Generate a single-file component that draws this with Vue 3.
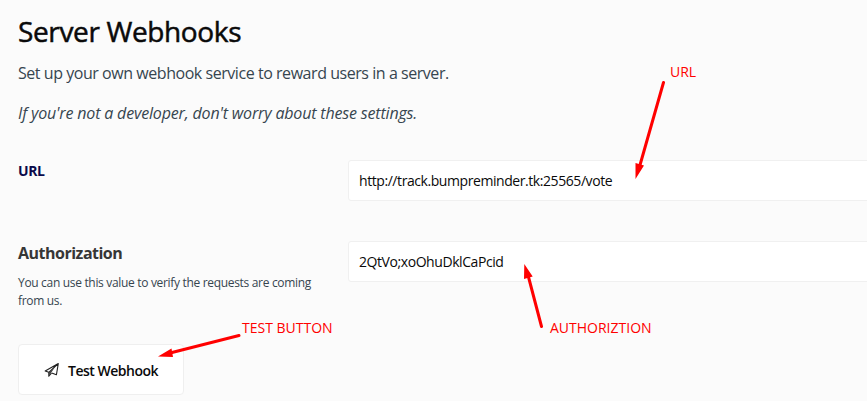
<script setup>
import { ref } from 'vue'

const url = ref('http://track.bumpreminder.tk:25565/vote')
const authorization = ref('2QtVo;xoOhuDklCaPcid')
</script>

<template>
  <main class="page">
    <h1 class="title">Server Webhooks</h1>
    <p class="lead">Set up your own webhook service to reward users in a server.</p>
    <p class="lead note">If you're not a developer, don't worry about these settings.</p>

    <section class="row">
      <div class="label-col">
        <label class="label url-label" for="url">URL</label>
      </div>
      <input id="url" v-model="url" class="field" type="text" />
    </section>

    <section class="row auth-row">
      <div class="label-col">
        <label class="label auth-label" for="auth">Authorization</label>
        <p class="hint">You can use this value to verify the requests are coming<br />from us.</p>
      </div>
      <input id="auth" v-model="authorization" class="field" type="text" />
    </section>

    <button class="test-button" type="button">
      <svg class="plane" viewBox="0 0 16 16" width="16" height="16">
        <path d="M14.3 1.5 1.2 8.9l3.6 1.4 9.500-8.800-1.900 11.300-4.700-1.700" />
        <path d="M4.800 10.300v3.900l2.700-3" />
        <path class="fold" d="M4.800 10.300 11.500 4.300 7.200 10.700 5.200 13.700z" />
      </svg>
      <span class="button-text">Test Webhook</span>
    </button>

    <div class="annotations">
      <svg class="arrows" viewBox="0 0 867 401" width="867" height="401">
        <path class="shaft" d="M663.5 82.5 640 165M541.5 326.5 528.5 277M239 335.5 172 352.5" />
        <path class="head" d="M635.5 179V163L644 165.500ZM524.300 264 532.700 276.500 524 279ZM158 356.500 171.500 348.500 173 357Z" />
      </svg>
      <span class="mark mark-url">URL</span>
      <span class="mark mark-auth">AUTHORIZTION</span>
      <span class="mark mark-test">TEST BUTTON</span>
    </div>
  </main>
</template>

<style>
body {
  background: #fbfbfb;
  overflow: hidden;
}
</style>

<style scoped>
.page {
  position: relative;
  box-sizing: border-box;
  height: 401px;
  padding: 11px 0 0 18px;
  overflow: hidden;
  font-family: "Open Sans", "Noto Sans", sans-serif;
  color: #36454f;
}
.title {
  margin: 0;
  font-size: 28px;
  line-height: 40px;
  font-weight: 500;
  color: #0a0a0a;
  letter-spacing: -0.36px;
  -webkit-text-stroke: 0.5px #0a0a0a;
}
.lead {
  margin: 10px 0 0;
  font-size: 16px;
  line-height: 25px;
  letter-spacing: -0.45px;
}
.note {
  margin-top: 15px;
  font-style: italic;
  letter-spacing: -0.17px;
}
.row {
  display: flex;
  margin-top: 34px;
  height: 41px;
}
.auth-row {
  margin-top: 40px;
}
.label-col {
  flex: 0 0 330px;
}
.label {
  display: block;
  font-weight: 700;
}
.url-label {
  font-size: 14px;
  line-height: 22px;
  color: #0a0a4a;
  letter-spacing: -0.4px;
}
.auth-label {
  padding-top: 1px;
  font-size: 16px;
  line-height: 22px;
  color: #363636;
  letter-spacing: -0.5px;
}
.hint {
  margin: 10px 0 0;
  font-size: 12px;
  line-height: 18px;
  letter-spacing: -0.32px;
  white-space: nowrap;
}
.field {
  flex: 0 0 560px;
  box-sizing: border-box;
  height: 41px;
  padding: 0 10px;
  border: 1px solid #f0f0f0;
  border-radius: 3px;
  background: #fff;
  font: 14px "Open Sans", "Noto Sans", sans-serif;
  letter-spacing: -0.43px;
  color: #0a0a0a;
  outline: none;
}
.test-button {
  display: flex;
  align-items: center;
  box-sizing: border-box;
  width: 166px;
  height: 51px;
  margin-top: 62px;
  padding: 1px 0 0 25px;
  gap: 8px;
  border: 1px solid #efefef;
  border-radius: 4px;
  background: #fff;
  font: 600 14px "Open Sans", "Noto Sans", sans-serif;
  letter-spacing: -0.5px;
  color: #0a0a0a;
  white-space: nowrap;
}
.plane {
  fill: none;
  stroke: #222;
  stroke-width: 1.1;
  stroke-linejoin: round;
}
.plane .fold {
  fill: #444;
  stroke: none;
}
.annotations {
  position: absolute;
  inset: 0;
  pointer-events: none;
}
.arrows {
  display: block;
}
.shaft {
  fill: none;
  stroke: #f00;
  stroke-width: 3;
  stroke-linecap: round;
}
.head {
  fill: #f00;
}
.mark {
  position: absolute;
  font-size: 14px;
  line-height: 18px;
  color: #f00;
  white-space: nowrap;
}
.mark-url {
  left: 670px;
  top: 63px;
}
.mark-auth {
  left: 550px;
  top: 319px;
}
.mark-test {
  left: 242px;
  top: 319px;
}
</style>
